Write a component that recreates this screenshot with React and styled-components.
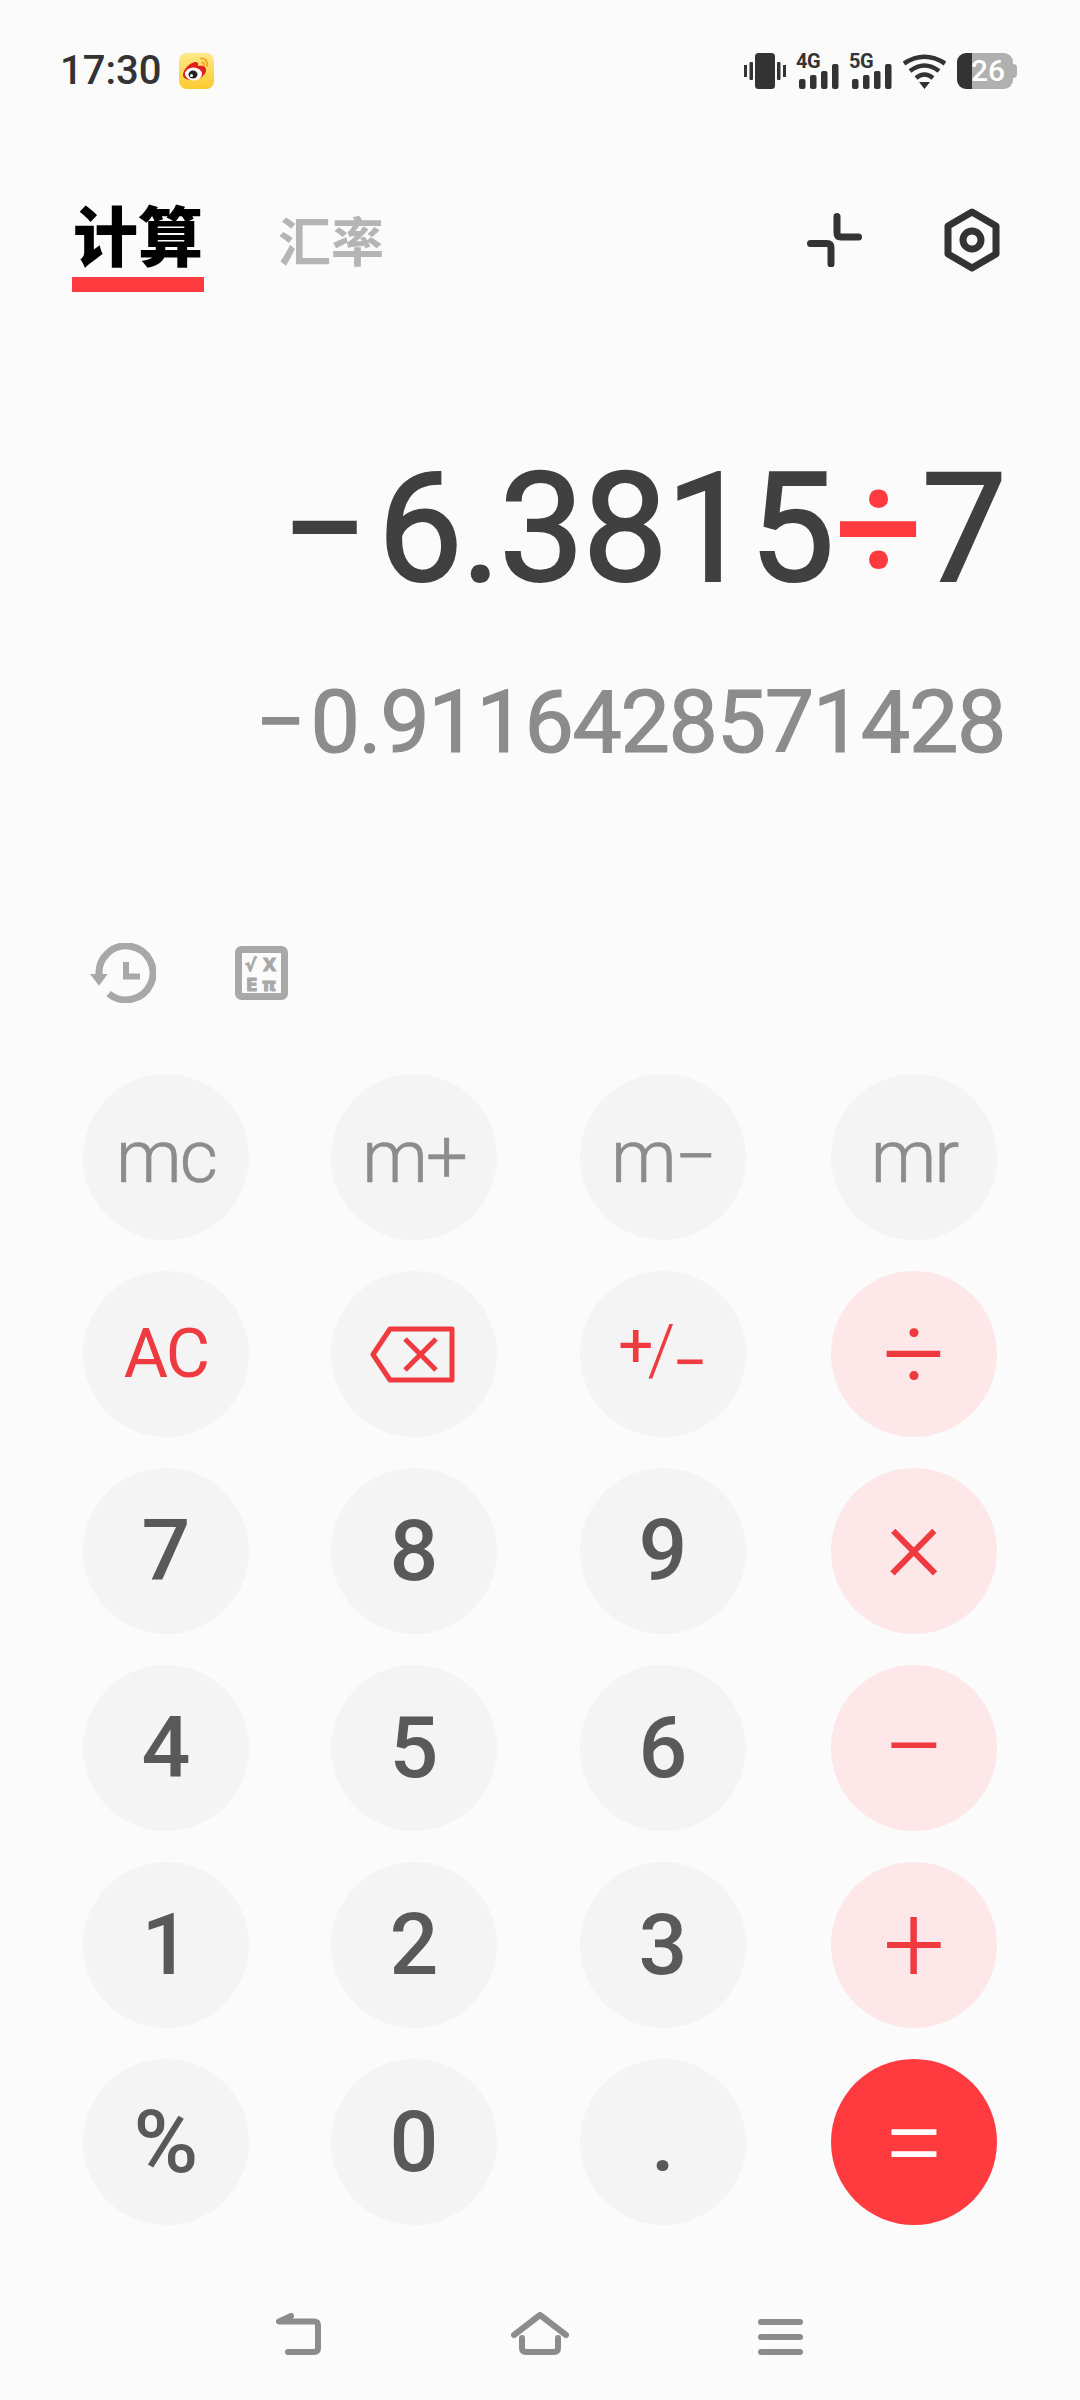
import styled, { createGlobalStyle } from "styled-components";

const Global = createGlobalStyle`
    html, body { margin: 0; padding: 0; background: #fbfbfb; }
    * { box-sizing: border-box; }
`;

const RED = "#ff3b40";

const Page = styled.div`
    width: 1080px;
    height: 2400px;
    background: #fbfbfb;
    font-family: Roboto, "Noto Sans CJK SC", sans-serif;
    display: flex;
    flex-direction: column;
    overflow: hidden;
`;

const StatusBar = styled.div`
    height: 36px;
    margin-top: 53px;
    padding: 0 60px;
    display: flex;
    align-items: center;
    justify-content: space-between;
`;

const StatusLeft = styled.div`
    display: flex;
    align-items: center;
    gap: 18px;
`;

const Time = styled.span`
    font-size: 40px;
    font-weight: 500;
    line-height: 36px;
    color: #333;
`;

const StatusRight = styled.div`
    display: flex;
    align-items: center;
    gap: 10px;
`;

const Signal = styled.div`
    position: relative;
    width: 43px;
    height: 36px;
`;

const SignalLabel = styled.span`
    position: absolute;
    top: -1px;
    left: 0;
    font-size: 20px;
    font-weight: 700;
    line-height: 18px;
    letter-spacing: -0.5px;
    color: #333;
`;

const Battery = styled.div`
    position: relative;
    width: 56px;
    height: 36px;
    margin-right: 7px;
    border-radius: 9px;
    background: linear-gradient(90deg, #333 15px, #b0b0b0 15px);
    color: #fff;
    font-size: 30px;
    font-weight: 500;
    line-height: 36px;
    padding-left: 14px;

    &::after {
        content: "";
        position: absolute;
        right: -4px;
        top: 11px;
        width: 4px;
        height: 14px;
        border-radius: 0 4px 4px 0;
        background: #b0b0b0;
    }
`;

const Header = styled.div`
    height: 84px;
    margin-top: 119px;
    padding: 0 80px 0 72px;
    display: flex;
    align-items: flex-start;
    justify-content: space-between;
`;

const Tabs = styled.div`
    display: flex;
    align-items: flex-start;
    gap: 74px;
`;

const ActiveTab = styled.div`
    width: 132px;
    height: 84px;
    border-bottom: 15px solid ${RED};
    text-align: center;
    font-size: 65px;
    font-weight: 900;
    line-height: 62px;
    white-space: nowrap;
    color: #000;
`;

const Tab = styled.div`
    margin-top: 10px;
    font-size: 53px;
    font-weight: 700;
    line-height: 52px;
    color: #b5b5b5;
`;

const HeaderIcons = styled.div`
    display: flex;
    align-items: center;
    gap: 82px;
    height: 64px;
`;

const Display = styled.div`
    height: 646px;
    padding: 161px 75px 0 0;
    text-align: right;
`;

const Expression = styled.div`
    font-size: 152px;
    -webkit-text-stroke: 2px currentColor;
    letter-spacing: -2px;
    line-height: 152px;
    color: #404040;
    white-space: nowrap;
`;

const Sign = styled.span`
    margin-right: ${(p) => p.$gap}px;
`;

const Operator = styled.span`
    color: ${RED};
    margin: 0 1px 0 3px;
`;

const Result = styled.div`
    margin-top: 67px;
    font-size: 88px;
    -webkit-text-stroke: 1.2px currentColor;
    letter-spacing: -1.4px;
    line-height: 100px;
    color: #8c8c8c;
    white-space: nowrap;
`;

const Tools = styled.div`
    height: 70px;
    padding-left: 90px;
    display: flex;
    align-items: center;
    gap: 79px;
`;

const Keypad = styled.div`
    margin-top: 66px;
    padding-left: 83px;
    display: grid;
    grid-template-columns: 248px 249px 251px 166px;
    grid-auto-rows: 166px;
    row-gap: 31px;
`;

const keyBg = { plain: "#f4f4f4", op: "#fde7e8", eq: RED };
const keyColor = { digit: "#595959", memory: "#8c8c8c", red: "#ef3a3f", white: "#fff" };

const Key = styled.div`
    width: 166px;
    padding-bottom: ${(p) => p.$lift || 0}px;
    border-radius: 50%;
    background: ${(p) => keyBg[p.$bg || "plain"]};
    color: ${(p) => keyColor[p.$tone || "digit"]};
    font-size: ${(p) => p.$size || 86}px;
    font-weight: ${(p) => p.$weight || 500};
    letter-spacing: ${(p) => p.$track || 0}px;
    -webkit-text-stroke: ${(p) => p.$stroke || 0}px currentColor;
    line-height: 1;
    display: flex;
    align-items: center;
    justify-content: center;
`;

const ToggleSign = styled.span`
    white-space: nowrap;
`;

const PlusSign = styled.span`
    font-size: 62px;
    letter-spacing: -6px;
    vertical-align: 8px;
`;

const Slash = styled.span`
    font-size: 70px;
    font-weight: 300;
    letter-spacing: -3px;
`;

const MinusSign = styled.span`
    font-size: 62px;
    vertical-align: -10px;
`;

const NavBar = styled.div`
    margin-top: 87px;
    padding-left: 180px;
    display: grid;
    grid-template-columns: repeat(3, 240px);
    justify-items: center;
    align-items: end;
    height: 43px;
`;

const WeiboIcon = () => (
    <svg width="35" height="36" viewBox="0 0 35 36">
        <defs>
            <linearGradient id="wb" x1="0" y1="0" x2="0" y2="1">
                <stop offset="0" stopColor="#ffe98a" />
                <stop offset="1" stopColor="#fdc92f" />
            </linearGradient>
        </defs>
        <rect width="35" height="36" rx="8" fill="url(#wb)" />
        <path d="M4 22c0-5 6-12 12-13 3-.5 3.500 2 3 4 4-1 8 0 8 3.500 .5 6-8 10.500-14 10.500-5 0-9-1.500-9-5z" fill="#e0201c" />
        <ellipse cx="14.500" cy="21" rx="8.500" ry="6.500" fill="#fff" />
        <ellipse cx="14" cy="21.500" rx="4.500" ry="4" fill="#222" />
        <circle cx="12.500" cy="22.500" r="1.500" fill="#fff" />
        <path d="M22 5.500c3.500-.5 7 2.500 6 7.500M23 9.500c1.500 0 2.500 1 2 3" fill="none" stroke="#f3a41e" strokeWidth="1.800" strokeLinecap="round" />
    </svg>
);

const VibrateIcon = () => (
    <svg width="42" height="36" viewBox="0 0 42 36" fill="#333">
        <rect x="0" y="12" width="3" height="12" />
        <rect x="5.500" y="9" width="3.500" height="18" rx="1" />
        <rect x="11" y="0" width="20" height="36" rx="3.500" />
        <rect x="33" y="9" width="3.500" height="18" rx="1" />
        <rect x="39" y="12" width="3" height="12" />
    </svg>
);

const SignalBars = () => (
    <svg width="43" height="36" viewBox="0 0 43 36" fill="#333">
        <rect x="3" y="26" width="6.500" height="10" rx="2" />
        <rect x="14" y="22" width="6.500" height="14" rx="2" />
        <rect x="25" y="18" width="6.500" height="18" rx="2" />
        <rect x="36" y="11" width="6.500" height="25" rx="2" />
    </svg>
);

const WifiIcon = () => (
    <svg width="45" height="36" viewBox="0 0 45 36" fill="none" stroke="#333" strokeWidth="4.500">
        <path d="M2 10.500Q22.500 -3 43 10.500" />
        <path d="M8 18Q22.500 7 37 18" />
        <path d="M14 25Q22.500 18 31 25" />
        <path d="M17 29H28L22.500 36Z" fill="#333" stroke="none" />
    </svg>
);

const CompressIcon = () => (
    <svg width="55" height="54" viewBox="0 0 55 54" fill="none" stroke="#333" strokeWidth="7" strokeLinecap="round">
        <path d="M30 3.500V20q0 4 4 4H51.500" />
        <path d="M3.500 30.500H20q4 0 4 4V51" />
    </svg>
);

const SettingsIcon = () => (
    <svg width="56" height="64" viewBox="0 0 56 64" fill="none" stroke="#333" strokeWidth="7" strokeLinejoin="round">
        <path d="M28 4L52 18V46L28 60L4 46V18Z" />
        <circle cx="28" cy="32" r="9" />
    </svg>
);

const HistoryIcon = () => (
    <svg width="66" height="60" viewBox="0 0 66 60" fill="none" stroke="#a8a8a8" strokeWidth="7">
        <path d="M9.200 33A27 27 0 1 1 18.700 50.600" />
        <path d="M36 19V33.500H50" strokeWidth="6" />
        <path d="M0 31H17.700L9 42.700Z" fill="#a8a8a8" stroke="none" />
    </svg>
);

const FormulaIcon = () => (
    <svg width="53" height="54" viewBox="0 0 53 54" fill="#a8a8a8" stroke="#a8a8a8" strokeWidth="1" fontFamily="'DejaVu Sans', sans-serif" fontWeight="700" fontSize="17">
        <rect x="3.500" y="3.500" width="46" height="47" rx="3" fill="none" strokeWidth="7" />
        <text x="10" y="25">√</text>
        <text x="28" y="25">X</text>
        <text x="11" y="45">E</text>
        <text x="27" y="45" fontSize="18">π</text>
    </svg>
);

const BackspaceIcon = () => (
    <svg width="85" height="57" viewBox="0 0 85 57" fill="none" stroke="#ef3a3f" strokeWidth="5" strokeLinejoin="round" style={{ marginRight: 3 }}>
        <path d="M3 28.500L20 3H82V54H20Z" />
        <path d="M35 13L66 44M66 13L35 44" />
    </svg>
);

const BackIcon = () => (
    <svg width="48" height="42" viewBox="0 0 48 42" fill="none" stroke="#8c8c8c" strokeWidth="6" strokeLinecap="round" strokeLinejoin="round">
        <path d="M15 3L3 8.500H38q4 0 4 4V35q0 4-4 4H12" />
    </svg>
);

const HomeIcon = () => (
    <svg width="58" height="43" viewBox="0 0 58 43" fill="none" stroke="#8c8c8c" strokeWidth="6" strokeLinecap="round" strokeLinejoin="round">
        <path d="M3 23L29 3L55 23" />
        <path d="M11 26V36q0 4 4 4H43q4 0 4-4V26" />
    </svg>
);

const MenuIcon = () => (
    <svg width="45" height="36" viewBox="0 0 45 36" stroke="#8c8c8c" strokeWidth="6" strokeLinecap="round">
        <path d="M3 3H42M3 18H42M3 33H42" />
    </svg>
);

const Op = ({ children, $bg = "op", $tone = "red", $lift = 0 }) => (
    <Key $bg={$bg} $tone={$tone} $size={110} $weight={300} $lift={$lift}>{children}</Key>
);

const Memory = ({ children }) => (
    <Key $tone="memory" $size={74} $weight={300} $track={-2} $stroke={0.7}>{children}</Key>
);

export default function App() {
    return (
        <Page>
            <Global />
            <StatusBar>
                <StatusLeft>
                    <Time>17:30</Time>
                    <WeiboIcon />
                </StatusLeft>
                <StatusRight>
                    <VibrateIcon />
                    <Signal>
                        <SignalLabel>4G</SignalLabel>
                        <SignalBars />
                    </Signal>
                    <Signal>
                        <SignalLabel>5G</SignalLabel>
                        <SignalBars />
                    </Signal>
                    <WifiIcon />
                    <Battery>26</Battery>
                </StatusRight>
            </StatusBar>

            <Header>
                <Tabs>
                    <ActiveTab>计算</ActiveTab>
                    <Tab>汇率</Tab>
                </Tabs>
                <HeaderIcons>
                    <CompressIcon />
                    <SettingsIcon />
                </HeaderIcons>
            </Header>

            <Display>
                <Expression>
                    <Sign $gap={11}>−</Sign>6.3815<Operator>÷</Operator>7
                </Expression>
                <Result>
                    <Sign $gap={6}>−</Sign>0.9116428571428
                </Result>
            </Display>

            <Tools>
                <HistoryIcon />
                <FormulaIcon />
            </Tools>

            <Keypad>
                <Memory>mc</Memory>
                <Memory>m+</Memory>
                <Memory>m−</Memory>
                <Memory>mr</Memory>

                <Key $tone="red" $size={68} $weight={400} $track={-2}>AC</Key>
                <Key><BackspaceIcon /></Key>
                <Key $tone="red" $size={56} $weight={400}>
                    <ToggleSign><PlusSign>+</PlusSign><Slash>/</Slash><MinusSign>−</MinusSign></ToggleSign>
                </Key>
                <Op>÷</Op>

                <Key>7</Key>
                <Key>8</Key>
                <Key>9</Key>
                <Op $lift={14}>×</Op>

                <Key>4</Key>
                <Key>5</Key>
                <Key>6</Key>
                <Op>−</Op>

                <Key>1</Key>
                <Key>2</Key>
                <Key>3</Key>
                <Op>+</Op>

                <Key $size={88}>%</Key>
                <Key>0</Key>
                <Key>.</Key>
                <Op $bg="eq" $tone="white">=</Op>
            </Keypad>

            <NavBar>
                <BackIcon />
                <HomeIcon />
                <MenuIcon />
            </NavBar>
        </Page>
    );
}
